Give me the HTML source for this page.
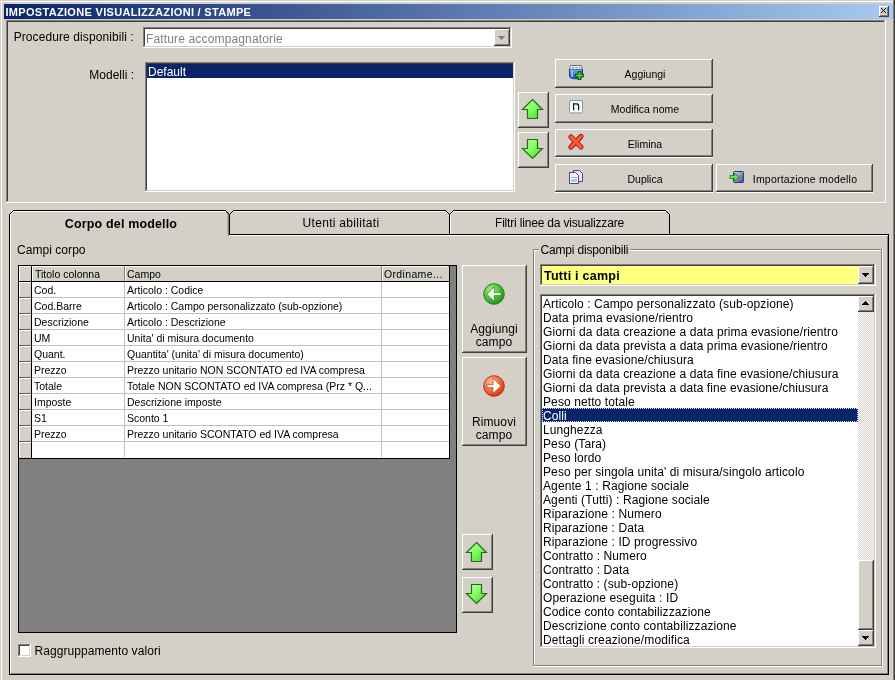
<!DOCTYPE html><html><head><meta charset="utf-8"><style>
html,body{margin:0;padding:0;width:895px;height:680px;overflow:hidden;background:#D4D0C8;position:relative;}
div{box-sizing:border-box;}
.t{filter:grayscale(1);}
</style></head><body>
<div style="position:absolute;left:0px;top:1px;width:893px;height:1px;background:#FFFFFF;"></div>
<div style="position:absolute;left:1px;top:1px;width:1px;height:679px;background:#FFFFFF;"></div>
<div style="position:absolute;left:893px;top:0px;width:1px;height:680px;background:#808080;"></div>
<div style="position:absolute;left:894px;top:0px;width:1px;height:680px;background:#404040;"></div>
<div style="position:absolute;left:4px;top:4px;width:889px;height:15px;background:linear-gradient(to right,#0A246A,#A6CAF0);"></div>
<div class="t" style="position:absolute;top:7px;font-family:'Liberation Sans', sans-serif;font-size:11px;line-height:11px;color:#FFFFFF;font-weight:bold;white-space:nowrap;letter-spacing:0.31px;left:5.5px;">IMPOSTAZIONE VISUALIZZAZIONI / STAMPE</div>
<div style="position:absolute;left:879px;top:6px;width:10px;height:11px;background:#404040;"></div>
<div style="position:absolute;left:879px;top:6px;width:9px;height:10px;background:#FFFFFF;"></div>
<div style="position:absolute;left:880px;top:7px;width:8px;height:9px;background:#808080;"></div>
<div style="position:absolute;left:880px;top:7px;width:7px;height:8px;background:#D4D0C8;"></div>
<div style="position:absolute;left:881px;top:8px;width:6px;height:7px;background:#D4D0C8;"></div>
<svg style="position:absolute;left:879px;top:6px" width="10" height="11" shape-rendering="crispEdges"><rect x="2" y="2" width="1" height="1" fill="#000"/><rect x="6" y="2" width="1" height="1" fill="#000"/><rect x="3" y="3" width="1" height="1" fill="#000"/><rect x="5" y="3" width="1" height="1" fill="#000"/><rect x="4" y="4" width="1" height="1" fill="#000"/><rect x="4" y="4" width="1" height="1" fill="#000"/><rect x="5" y="5" width="1" height="1" fill="#000"/><rect x="3" y="5" width="1" height="1" fill="#000"/><rect x="6" y="6" width="1" height="1" fill="#000"/><rect x="2" y="6" width="1" height="1" fill="#000"/></svg>
<div style="position:absolute;left:6px;top:20px;width:880px;height:183px;background:#FFFFFF;"></div>
<div style="position:absolute;left:6px;top:20px;width:879px;height:182px;background:#808080;"></div>
<div style="position:absolute;left:7px;top:21px;width:878px;height:181px;background:#D4D0C8;"></div>
<div style="position:absolute;left:7px;top:21px;width:877px;height:180px;background:#404040;"></div>
<div style="position:absolute;left:8px;top:22px;width:876px;height:179px;background:#D4D0C8;"></div>
<div class="t" style="position:absolute;top:31px;font-family:'Liberation Sans', sans-serif;font-size:12px;line-height:12px;color:#000;font-weight:normal;white-space:nowrap;letter-spacing:0.1px;right:761px;">Procedure disponibili :</div>
<div class="t" style="position:absolute;top:69px;font-family:'Liberation Sans', sans-serif;font-size:12px;line-height:12px;color:#000;font-weight:normal;white-space:nowrap;right:761px;">Modelli :</div>
<div style="position:absolute;left:143px;top:27px;width:369px;height:21px;background:#FFFFFF;"></div>
<div style="position:absolute;left:143px;top:27px;width:368px;height:20px;background:#808080;"></div>
<div style="position:absolute;left:144px;top:28px;width:367px;height:19px;background:#D4D0C8;"></div>
<div style="position:absolute;left:144px;top:28px;width:366px;height:18px;background:#404040;"></div>
<div style="position:absolute;left:145px;top:29px;width:365px;height:17px;background:#FFFFFF;"></div>
<div class="t" style="position:absolute;top:33px;font-family:'Liberation Sans', sans-serif;font-size:12px;line-height:12px;color:#808080;font-weight:normal;white-space:nowrap;letter-spacing:0.15px;left:146px;">Fatture accompagnatorie</div>
<div style="position:absolute;left:494px;top:29px;width:16px;height:17px;background:#404040;"></div>
<div style="position:absolute;left:494px;top:29px;width:15px;height:16px;background:#FFFFFF;"></div>
<div style="position:absolute;left:495px;top:30px;width:14px;height:15px;background:#808080;"></div>
<div style="position:absolute;left:495px;top:30px;width:13px;height:14px;background:#D4D0C8;"></div>
<div style="position:absolute;left:496px;top:31px;width:12px;height:13px;background:#D4D0C8;"></div>
<svg style="position:absolute;left:494px;top:29px" width="16" height="17" shape-rendering="crispEdges"><rect x="4" y="7" width="7" height="1" fill="#808080"/><rect x="5" y="8" width="5" height="1" fill="#808080"/><rect x="6" y="9" width="3" height="1" fill="#808080"/><rect x="7" y="10" width="1" height="1" fill="#808080"/></svg>
<div style="position:absolute;left:145px;top:62px;width:370px;height:130px;background:#FFFFFF;"></div>
<div style="position:absolute;left:145px;top:62px;width:369px;height:129px;background:#808080;"></div>
<div style="position:absolute;left:146px;top:63px;width:368px;height:128px;background:#D4D0C8;"></div>
<div style="position:absolute;left:146px;top:63px;width:367px;height:127px;background:#404040;"></div>
<div style="position:absolute;left:147px;top:64px;width:366px;height:126px;background:#FFFFFF;"></div>
<div style="position:absolute;left:147px;top:64px;width:366px;height:14px;background:#0A246A;"></div>
<div class="t" style="position:absolute;top:66px;font-family:'Liberation Sans', sans-serif;font-size:12px;line-height:12px;color:#FFFFFF;font-weight:normal;white-space:nowrap;left:148px;">Default</div>
<div style="position:absolute;left:518px;top:92px;width:31px;height:36px;background:#404040;"></div>
<div style="position:absolute;left:518px;top:92px;width:30px;height:35px;background:#FFFFFF;"></div>
<div style="position:absolute;left:519px;top:93px;width:29px;height:34px;background:#808080;"></div>
<div style="position:absolute;left:519px;top:93px;width:28px;height:33px;background:#D4D0C8;"></div>
<div style="position:absolute;left:520px;top:94px;width:27px;height:32px;background:#D4D0C8;"></div>
<div style="position:absolute;left:518px;top:132px;width:31px;height:36px;background:#404040;"></div>
<div style="position:absolute;left:518px;top:132px;width:30px;height:35px;background:#FFFFFF;"></div>
<div style="position:absolute;left:519px;top:133px;width:29px;height:34px;background:#808080;"></div>
<div style="position:absolute;left:519px;top:133px;width:28px;height:33px;background:#D4D0C8;"></div>
<div style="position:absolute;left:520px;top:134px;width:27px;height:32px;background:#D4D0C8;"></div>
<div style="position:absolute;left:555px;top:59px;width:158px;height:29px;background:#404040;"></div>
<div style="position:absolute;left:555px;top:59px;width:157px;height:28px;background:#FFFFFF;"></div>
<div style="position:absolute;left:556px;top:60px;width:156px;height:27px;background:#808080;"></div>
<div style="position:absolute;left:556px;top:60px;width:155px;height:26px;background:#D4D0C8;"></div>
<div style="position:absolute;left:557px;top:61px;width:154px;height:25px;background:#D4D0C8;"></div>
<div class="t" style="position:absolute;top:69px;font-family:'Liberation Sans', sans-serif;font-size:10.5px;line-height:10.5px;color:#000;font-weight:normal;white-space:nowrap;left:345px;width:600px;text-align:center;">Aggiungi</div>
<div style="position:absolute;left:555px;top:94px;width:158px;height:29px;background:#404040;"></div>
<div style="position:absolute;left:555px;top:94px;width:157px;height:28px;background:#FFFFFF;"></div>
<div style="position:absolute;left:556px;top:95px;width:156px;height:27px;background:#808080;"></div>
<div style="position:absolute;left:556px;top:95px;width:155px;height:26px;background:#D4D0C8;"></div>
<div style="position:absolute;left:557px;top:96px;width:154px;height:25px;background:#D4D0C8;"></div>
<div class="t" style="position:absolute;top:104px;font-family:'Liberation Sans', sans-serif;font-size:10.5px;line-height:10.5px;color:#000;font-weight:normal;white-space:nowrap;left:345px;width:600px;text-align:center;">Modifica nome</div>
<div style="position:absolute;left:555px;top:129px;width:158px;height:28px;background:#404040;"></div>
<div style="position:absolute;left:555px;top:129px;width:157px;height:27px;background:#FFFFFF;"></div>
<div style="position:absolute;left:556px;top:130px;width:156px;height:26px;background:#808080;"></div>
<div style="position:absolute;left:556px;top:130px;width:155px;height:25px;background:#D4D0C8;"></div>
<div style="position:absolute;left:557px;top:131px;width:154px;height:24px;background:#D4D0C8;"></div>
<div style="position:absolute;left:555px;top:157px;width:158px;height:1px;background:#FFFFFF;"></div>
<div class="t" style="position:absolute;top:139px;font-family:'Liberation Sans', sans-serif;font-size:10.5px;line-height:10.5px;color:#000;font-weight:normal;white-space:nowrap;left:345px;width:600px;text-align:center;">Elimina</div>
<div style="position:absolute;left:555px;top:164px;width:158px;height:28px;background:#404040;"></div>
<div style="position:absolute;left:555px;top:164px;width:157px;height:27px;background:#FFFFFF;"></div>
<div style="position:absolute;left:556px;top:165px;width:156px;height:26px;background:#808080;"></div>
<div style="position:absolute;left:556px;top:165px;width:155px;height:25px;background:#D4D0C8;"></div>
<div style="position:absolute;left:557px;top:166px;width:154px;height:24px;background:#D4D0C8;"></div>
<div style="position:absolute;left:555px;top:192px;width:158px;height:1px;background:#FFFFFF;"></div>
<div class="t" style="position:absolute;top:174px;font-family:'Liberation Sans', sans-serif;font-size:10.5px;line-height:10.5px;color:#000;font-weight:normal;white-space:nowrap;left:345px;width:600px;text-align:center;">Duplica</div>
<div style="position:absolute;left:716px;top:164px;width:157px;height:28px;background:#404040;"></div>
<div style="position:absolute;left:716px;top:164px;width:156px;height:27px;background:#FFFFFF;"></div>
<div style="position:absolute;left:717px;top:165px;width:155px;height:26px;background:#808080;"></div>
<div style="position:absolute;left:717px;top:165px;width:154px;height:25px;background:#D4D0C8;"></div>
<div style="position:absolute;left:718px;top:166px;width:153px;height:24px;background:#D4D0C8;"></div>
<div style="position:absolute;left:716px;top:192px;width:157px;height:1px;background:#FFFFFF;"></div>
<div class="t" style="position:absolute;top:174px;font-family:'Liberation Sans', sans-serif;font-size:10.5px;line-height:10.5px;color:#000;font-weight:normal;white-space:nowrap;letter-spacing:0.2px;left:505px;width:600px;text-align:center;">Importazione modello</div>
<div style="position:absolute;left:9px;top:234px;width:880px;height:441px;background:#000000;"></div>
<div style="position:absolute;left:10px;top:235px;width:878px;height:439px;background:#FFFFFF;"></div>
<div style="position:absolute;left:11px;top:236px;width:877px;height:438px;background:#808080;"></div>
<div style="position:absolute;left:11px;top:236px;width:876px;height:437px;background:#D4D0C8;"></div>
<svg style="position:absolute;left:0;top:0" width="895" height="240" shape-rendering="crispEdges"><rect x="230" y="211" width="219" height="23" fill="#D4D0C8"/><rect x="229" y="214" width="1" height="21" fill="#000"/><rect x="449" y="214" width="1" height="21" fill="#000"/><rect x="229" y="214" width="1" height="1" fill="#000"/><rect x="445" y="210" width="1" height="1" fill="#000"/><rect x="230" y="213" width="1" height="1" fill="#000"/><rect x="446" y="211" width="1" height="1" fill="#000"/><rect x="231" y="212" width="1" height="1" fill="#000"/><rect x="447" y="212" width="1" height="1" fill="#000"/><rect x="232" y="211" width="1" height="1" fill="#000"/><rect x="448" y="213" width="1" height="1" fill="#000"/><rect x="233" y="210" width="1" height="1" fill="#000"/><rect x="449" y="214" width="1" height="1" fill="#000"/><rect x="233" y="210" width="213" height="1" fill="#000"/><rect x="233" y="211" width="213" height="1" fill="#FFFFFF"/><rect x="229" y="210" width="0" height="0" fill="#D4D0C8"/><rect x="230" y="211" width="0" height="0" fill="#D4D0C8"/><rect x="231" y="212" width="0" height="0" fill="#D4D0C8"/><rect x="232" y="213" width="0" height="0" fill="#D4D0C8"/><rect x="450" y="211" width="219" height="23" fill="#D4D0C8"/><rect x="449" y="214" width="1" height="21" fill="#000"/><rect x="669" y="214" width="1" height="21" fill="#000"/><rect x="449" y="214" width="1" height="1" fill="#000"/><rect x="665" y="210" width="1" height="1" fill="#000"/><rect x="450" y="213" width="1" height="1" fill="#000"/><rect x="666" y="211" width="1" height="1" fill="#000"/><rect x="451" y="212" width="1" height="1" fill="#000"/><rect x="667" y="212" width="1" height="1" fill="#000"/><rect x="452" y="211" width="1" height="1" fill="#000"/><rect x="668" y="213" width="1" height="1" fill="#000"/><rect x="453" y="210" width="1" height="1" fill="#000"/><rect x="669" y="214" width="1" height="1" fill="#000"/><rect x="453" y="210" width="213" height="1" fill="#000"/><rect x="450" y="214" width="1" height="20" fill="#FFFFFF"/><rect x="450" y="214" width="1" height="1" fill="#FFFFFF"/><rect x="451" y="213" width="1" height="1" fill="#FFFFFF"/><rect x="452" y="212" width="1" height="1" fill="#FFFFFF"/><rect x="453" y="211" width="1" height="1" fill="#FFFFFF"/><rect x="453" y="211" width="213" height="1" fill="#FFFFFF"/><rect x="449" y="210" width="0" height="0" fill="#D4D0C8"/><rect x="450" y="211" width="0" height="0" fill="#D4D0C8"/><rect x="451" y="212" width="0" height="0" fill="#D4D0C8"/><rect x="452" y="213" width="0" height="0" fill="#D4D0C8"/><rect x="10" y="211" width="219" height="25" fill="#D4D0C8"/><rect x="9" y="214" width="1" height="21" fill="#000"/><rect x="229" y="214" width="1" height="21" fill="#000"/><rect x="9" y="214" width="1" height="1" fill="#000"/><rect x="225" y="210" width="1" height="1" fill="#000"/><rect x="10" y="213" width="1" height="1" fill="#000"/><rect x="226" y="211" width="1" height="1" fill="#000"/><rect x="11" y="212" width="1" height="1" fill="#000"/><rect x="227" y="212" width="1" height="1" fill="#000"/><rect x="12" y="211" width="1" height="1" fill="#000"/><rect x="228" y="213" width="1" height="1" fill="#000"/><rect x="13" y="210" width="1" height="1" fill="#000"/><rect x="229" y="214" width="1" height="1" fill="#000"/><rect x="13" y="210" width="213" height="1" fill="#000"/><rect x="10" y="214" width="1" height="22" fill="#FFFFFF"/><rect x="10" y="214" width="1" height="1" fill="#FFFFFF"/><rect x="11" y="213" width="1" height="1" fill="#FFFFFF"/><rect x="12" y="212" width="1" height="1" fill="#FFFFFF"/><rect x="13" y="211" width="1" height="1" fill="#FFFFFF"/><rect x="13" y="211" width="213" height="1" fill="#FFFFFF"/><rect x="9" y="210" width="0" height="0" fill="#D4D0C8"/><rect x="10" y="211" width="0" height="0" fill="#D4D0C8"/><rect x="11" y="212" width="0" height="0" fill="#D4D0C8"/><rect x="12" y="213" width="0" height="0" fill="#D4D0C8"/><rect x="228" y="214" width="1" height="22" fill="#808080"/><rect x="227" y="214" width="1" height="22" fill="#B4B0AA"/><rect x="226" y="212" width="1" height="1" fill="#808080"/><rect x="227" y="213" width="1" height="1" fill="#808080"/></svg>
<div style="position:absolute;left:11px;top:234px;width:217px;height:2px;background:#D4D0C8;"></div>
<div style="position:absolute;left:10px;top:234px;width:1px;height:3px;background:#FFFFFF;"></div>
<div class="t" style="position:absolute;top:218px;font-family:'Liberation Sans', sans-serif;font-size:12.5px;line-height:12.5px;color:#000;font-weight:bold;white-space:nowrap;letter-spacing:0.15px;left:-179px;width:600px;text-align:center;">Corpo del modello</div>
<div class="t" style="position:absolute;top:217px;font-family:'Liberation Sans', sans-serif;font-size:12px;line-height:12px;color:#000;font-weight:normal;white-space:nowrap;letter-spacing:0.3px;left:41px;width:600px;text-align:center;">Utenti abilitati</div>
<div class="t" style="position:absolute;top:217px;font-family:'Liberation Sans', sans-serif;font-size:12px;line-height:12px;color:#000;font-weight:normal;white-space:nowrap;letter-spacing:-0.18px;left:259.5px;width:600px;text-align:center;">Filtri linee da visualizzare</div>
<div class="t" style="position:absolute;top:244px;font-family:'Liberation Sans', sans-serif;font-size:12px;line-height:12px;color:#000;font-weight:normal;white-space:nowrap;letter-spacing:0.05px;left:17px;">Campi corpo</div>
<div style="position:absolute;left:18px;top:265px;width:439px;height:368px;background:#000000;"></div>
<div style="position:absolute;left:19px;top:266px;width:437px;height:366px;background:#808080;"></div>
<div style="position:absolute;left:19px;top:266px;width:430px;height:192px;background:#FFFFFF;"></div>
<div style="position:absolute;left:19px;top:266px;width:12px;height:192px;background:#D4D0C8;"></div>
<div style="position:absolute;left:31px;top:266px;width:1px;height:192px;background:#000;"></div>
<div style="position:absolute;left:32px;top:266px;width:417px;height:15px;background:#D4D0C8;"></div>
<div style="position:absolute;left:19px;top:281px;width:430px;height:1px;background:#000;"></div>
<div style="position:absolute;left:449px;top:266px;width:1px;height:192px;background:#000;"></div>
<div style="position:absolute;left:19px;top:458px;width:431px;height:1px;background:#000;"></div>
<div style="position:absolute;left:19px;top:266px;width:12px;height:1px;background:#FFFFFF;"></div>
<div style="position:absolute;left:19px;top:266px;width:1px;height:15px;background:#FFFFFF;"></div>
<div style="position:absolute;left:32px;top:266px;width:92px;height:1px;background:#FFFFFF;"></div>
<div style="position:absolute;left:32px;top:266px;width:1px;height:15px;background:#FFFFFF;"></div>
<div style="position:absolute;left:125px;top:266px;width:256px;height:1px;background:#FFFFFF;"></div>
<div style="position:absolute;left:125px;top:266px;width:1px;height:15px;background:#FFFFFF;"></div>
<div style="position:absolute;left:382px;top:266px;width:66px;height:1px;background:#FFFFFF;"></div>
<div style="position:absolute;left:382px;top:266px;width:1px;height:15px;background:#FFFFFF;"></div>
<div style="position:absolute;left:124px;top:266px;width:1px;height:15px;background:#808080;"></div>
<div style="position:absolute;left:381px;top:266px;width:1px;height:15px;background:#808080;"></div>
<div class="t" style="position:absolute;top:269px;font-family:'Liberation Sans', sans-serif;font-size:10.5px;line-height:10.5px;color:#000;font-weight:normal;white-space:nowrap;left:35px;">Titolo colonna</div>
<div class="t" style="position:absolute;top:269px;font-family:'Liberation Sans', sans-serif;font-size:10.5px;line-height:10.5px;color:#000;font-weight:normal;white-space:nowrap;left:127px;">Campo</div>
<div class="t" style="position:absolute;top:269px;font-family:'Liberation Sans', sans-serif;font-size:10.5px;line-height:10.5px;color:#000;font-weight:normal;white-space:nowrap;letter-spacing:0.35px;left:384px;">Ordiname...</div>
<div style="position:absolute;left:19px;top:282px;width:12px;height:1px;background:#FFFFFF;"></div>
<div style="position:absolute;left:19px;top:282px;width:1px;height:15px;background:#FFFFFF;"></div>
<div style="position:absolute;left:19px;top:297px;width:12px;height:1px;background:#606060;"></div>
<div style="position:absolute;left:32px;top:297px;width:417px;height:1px;background:#C0C0C0;"></div>
<div style="position:absolute;left:124px;top:282px;width:1px;height:16px;background:#C0C0C0;"></div>
<div style="position:absolute;left:381px;top:282px;width:1px;height:16px;background:#C0C0C0;"></div>
<div class="t" style="position:absolute;top:285px;font-family:'Liberation Sans', sans-serif;font-size:10.5px;line-height:10.5px;color:#000;font-weight:normal;white-space:nowrap;left:34px;">Cod.</div>
<div class="t" style="position:absolute;top:285px;font-family:'Liberation Sans', sans-serif;font-size:10.5px;line-height:10.5px;color:#000;font-weight:normal;white-space:nowrap;left:127px;">Articolo : Codice</div>
<div style="position:absolute;left:19px;top:298px;width:12px;height:1px;background:#FFFFFF;"></div>
<div style="position:absolute;left:19px;top:298px;width:1px;height:15px;background:#FFFFFF;"></div>
<div style="position:absolute;left:19px;top:313px;width:12px;height:1px;background:#606060;"></div>
<div style="position:absolute;left:32px;top:313px;width:417px;height:1px;background:#C0C0C0;"></div>
<div style="position:absolute;left:124px;top:298px;width:1px;height:16px;background:#C0C0C0;"></div>
<div style="position:absolute;left:381px;top:298px;width:1px;height:16px;background:#C0C0C0;"></div>
<div class="t" style="position:absolute;top:301px;font-family:'Liberation Sans', sans-serif;font-size:10.5px;line-height:10.5px;color:#000;font-weight:normal;white-space:nowrap;left:34px;">Cod.Barre</div>
<div class="t" style="position:absolute;top:301px;font-family:'Liberation Sans', sans-serif;font-size:10.5px;line-height:10.5px;color:#000;font-weight:normal;white-space:nowrap;left:127px;">Articolo : Campo personalizzato (sub-opzione)</div>
<div style="position:absolute;left:19px;top:314px;width:12px;height:1px;background:#FFFFFF;"></div>
<div style="position:absolute;left:19px;top:314px;width:1px;height:15px;background:#FFFFFF;"></div>
<div style="position:absolute;left:19px;top:329px;width:12px;height:1px;background:#606060;"></div>
<div style="position:absolute;left:32px;top:329px;width:417px;height:1px;background:#C0C0C0;"></div>
<div style="position:absolute;left:124px;top:314px;width:1px;height:16px;background:#C0C0C0;"></div>
<div style="position:absolute;left:381px;top:314px;width:1px;height:16px;background:#C0C0C0;"></div>
<div class="t" style="position:absolute;top:317px;font-family:'Liberation Sans', sans-serif;font-size:10.5px;line-height:10.5px;color:#000;font-weight:normal;white-space:nowrap;left:34px;">Descrizione</div>
<div class="t" style="position:absolute;top:317px;font-family:'Liberation Sans', sans-serif;font-size:10.5px;line-height:10.5px;color:#000;font-weight:normal;white-space:nowrap;left:127px;">Articolo : Descrizione</div>
<div style="position:absolute;left:19px;top:330px;width:12px;height:1px;background:#FFFFFF;"></div>
<div style="position:absolute;left:19px;top:330px;width:1px;height:15px;background:#FFFFFF;"></div>
<div style="position:absolute;left:19px;top:345px;width:12px;height:1px;background:#606060;"></div>
<div style="position:absolute;left:32px;top:345px;width:417px;height:1px;background:#C0C0C0;"></div>
<div style="position:absolute;left:124px;top:330px;width:1px;height:16px;background:#C0C0C0;"></div>
<div style="position:absolute;left:381px;top:330px;width:1px;height:16px;background:#C0C0C0;"></div>
<div class="t" style="position:absolute;top:333px;font-family:'Liberation Sans', sans-serif;font-size:10.5px;line-height:10.5px;color:#000;font-weight:normal;white-space:nowrap;left:34px;">UM</div>
<div class="t" style="position:absolute;top:333px;font-family:'Liberation Sans', sans-serif;font-size:10.5px;line-height:10.5px;color:#000;font-weight:normal;white-space:nowrap;left:127px;">Unita&#x27; di misura documento</div>
<div style="position:absolute;left:19px;top:346px;width:12px;height:1px;background:#FFFFFF;"></div>
<div style="position:absolute;left:19px;top:346px;width:1px;height:15px;background:#FFFFFF;"></div>
<div style="position:absolute;left:19px;top:361px;width:12px;height:1px;background:#606060;"></div>
<div style="position:absolute;left:32px;top:361px;width:417px;height:1px;background:#C0C0C0;"></div>
<div style="position:absolute;left:124px;top:346px;width:1px;height:16px;background:#C0C0C0;"></div>
<div style="position:absolute;left:381px;top:346px;width:1px;height:16px;background:#C0C0C0;"></div>
<div class="t" style="position:absolute;top:349px;font-family:'Liberation Sans', sans-serif;font-size:10.5px;line-height:10.5px;color:#000;font-weight:normal;white-space:nowrap;left:34px;">Quant.</div>
<div class="t" style="position:absolute;top:349px;font-family:'Liberation Sans', sans-serif;font-size:10.5px;line-height:10.5px;color:#000;font-weight:normal;white-space:nowrap;left:127px;">Quantita&#x27; (unita&#x27; di misura documento)</div>
<div style="position:absolute;left:19px;top:362px;width:12px;height:1px;background:#FFFFFF;"></div>
<div style="position:absolute;left:19px;top:362px;width:1px;height:15px;background:#FFFFFF;"></div>
<div style="position:absolute;left:19px;top:377px;width:12px;height:1px;background:#606060;"></div>
<div style="position:absolute;left:32px;top:377px;width:417px;height:1px;background:#C0C0C0;"></div>
<div style="position:absolute;left:124px;top:362px;width:1px;height:16px;background:#C0C0C0;"></div>
<div style="position:absolute;left:381px;top:362px;width:1px;height:16px;background:#C0C0C0;"></div>
<div class="t" style="position:absolute;top:365px;font-family:'Liberation Sans', sans-serif;font-size:10.5px;line-height:10.5px;color:#000;font-weight:normal;white-space:nowrap;left:34px;">Prezzo</div>
<div class="t" style="position:absolute;top:365px;font-family:'Liberation Sans', sans-serif;font-size:10.5px;line-height:10.5px;color:#000;font-weight:normal;white-space:nowrap;left:127px;">Prezzo unitario NON SCONTATO ed IVA compresa</div>
<div style="position:absolute;left:19px;top:378px;width:12px;height:1px;background:#FFFFFF;"></div>
<div style="position:absolute;left:19px;top:378px;width:1px;height:15px;background:#FFFFFF;"></div>
<div style="position:absolute;left:19px;top:393px;width:12px;height:1px;background:#606060;"></div>
<div style="position:absolute;left:32px;top:393px;width:417px;height:1px;background:#C0C0C0;"></div>
<div style="position:absolute;left:124px;top:378px;width:1px;height:16px;background:#C0C0C0;"></div>
<div style="position:absolute;left:381px;top:378px;width:1px;height:16px;background:#C0C0C0;"></div>
<div class="t" style="position:absolute;top:381px;font-family:'Liberation Sans', sans-serif;font-size:10.5px;line-height:10.5px;color:#000;font-weight:normal;white-space:nowrap;left:34px;">Totale</div>
<div class="t" style="position:absolute;top:381px;font-family:'Liberation Sans', sans-serif;font-size:10.5px;line-height:10.5px;color:#000;font-weight:normal;white-space:nowrap;left:127px;">Totale NON SCONTATO ed IVA compresa (Prz * Q...</div>
<div style="position:absolute;left:19px;top:394px;width:12px;height:1px;background:#FFFFFF;"></div>
<div style="position:absolute;left:19px;top:394px;width:1px;height:15px;background:#FFFFFF;"></div>
<div style="position:absolute;left:19px;top:409px;width:12px;height:1px;background:#606060;"></div>
<div style="position:absolute;left:32px;top:409px;width:417px;height:1px;background:#C0C0C0;"></div>
<div style="position:absolute;left:124px;top:394px;width:1px;height:16px;background:#C0C0C0;"></div>
<div style="position:absolute;left:381px;top:394px;width:1px;height:16px;background:#C0C0C0;"></div>
<div class="t" style="position:absolute;top:397px;font-family:'Liberation Sans', sans-serif;font-size:10.5px;line-height:10.5px;color:#000;font-weight:normal;white-space:nowrap;left:34px;">Imposte</div>
<div class="t" style="position:absolute;top:397px;font-family:'Liberation Sans', sans-serif;font-size:10.5px;line-height:10.5px;color:#000;font-weight:normal;white-space:nowrap;left:127px;">Descrizione imposte</div>
<div style="position:absolute;left:19px;top:410px;width:12px;height:1px;background:#FFFFFF;"></div>
<div style="position:absolute;left:19px;top:410px;width:1px;height:15px;background:#FFFFFF;"></div>
<div style="position:absolute;left:19px;top:425px;width:12px;height:1px;background:#606060;"></div>
<div style="position:absolute;left:32px;top:425px;width:417px;height:1px;background:#C0C0C0;"></div>
<div style="position:absolute;left:124px;top:410px;width:1px;height:16px;background:#C0C0C0;"></div>
<div style="position:absolute;left:381px;top:410px;width:1px;height:16px;background:#C0C0C0;"></div>
<div class="t" style="position:absolute;top:413px;font-family:'Liberation Sans', sans-serif;font-size:10.5px;line-height:10.5px;color:#000;font-weight:normal;white-space:nowrap;left:34px;">S1</div>
<div class="t" style="position:absolute;top:413px;font-family:'Liberation Sans', sans-serif;font-size:10.5px;line-height:10.5px;color:#000;font-weight:normal;white-space:nowrap;left:127px;">Sconto 1</div>
<div style="position:absolute;left:19px;top:426px;width:12px;height:1px;background:#FFFFFF;"></div>
<div style="position:absolute;left:19px;top:426px;width:1px;height:15px;background:#FFFFFF;"></div>
<div style="position:absolute;left:19px;top:441px;width:12px;height:1px;background:#606060;"></div>
<div style="position:absolute;left:32px;top:441px;width:417px;height:1px;background:#C0C0C0;"></div>
<div style="position:absolute;left:124px;top:426px;width:1px;height:16px;background:#C0C0C0;"></div>
<div style="position:absolute;left:381px;top:426px;width:1px;height:16px;background:#C0C0C0;"></div>
<div class="t" style="position:absolute;top:429px;font-family:'Liberation Sans', sans-serif;font-size:10.5px;line-height:10.5px;color:#000;font-weight:normal;white-space:nowrap;left:34px;">Prezzo</div>
<div class="t" style="position:absolute;top:429px;font-family:'Liberation Sans', sans-serif;font-size:10.5px;line-height:10.5px;color:#000;font-weight:normal;white-space:nowrap;left:127px;">Prezzo unitario SCONTATO ed IVA compresa</div>
<div style="position:absolute;left:19px;top:442px;width:12px;height:1px;background:#FFFFFF;"></div>
<div style="position:absolute;left:19px;top:442px;width:1px;height:15px;background:#FFFFFF;"></div>
<div style="position:absolute;left:124px;top:442px;width:1px;height:15px;background:#C0C0C0;"></div>
<div style="position:absolute;left:381px;top:442px;width:1px;height:15px;background:#C0C0C0;"></div>
<div style="position:absolute;left:462px;top:265px;width:65px;height:88px;background:#404040;"></div>
<div style="position:absolute;left:462px;top:265px;width:64px;height:87px;background:#FFFFFF;"></div>
<div style="position:absolute;left:463px;top:266px;width:63px;height:86px;background:#808080;"></div>
<div style="position:absolute;left:463px;top:266px;width:62px;height:85px;background:#D4D0C8;"></div>
<div style="position:absolute;left:464px;top:267px;width:61px;height:84px;background:#D4D0C8;"></div>
<div class="t" style="position:absolute;top:323px;font-family:'Liberation Sans', sans-serif;font-size:12px;line-height:12px;color:#000;font-weight:normal;white-space:nowrap;letter-spacing:0.1px;left:194px;width:600px;text-align:center;">Aggiungi</div>
<div class="t" style="position:absolute;top:336px;font-family:'Liberation Sans', sans-serif;font-size:12px;line-height:12px;color:#000;font-weight:normal;white-space:nowrap;letter-spacing:0.1px;left:194px;width:600px;text-align:center;">campo</div>
<div style="position:absolute;left:462px;top:357px;width:65px;height:89px;background:#404040;"></div>
<div style="position:absolute;left:462px;top:357px;width:64px;height:88px;background:#FFFFFF;"></div>
<div style="position:absolute;left:463px;top:358px;width:63px;height:87px;background:#808080;"></div>
<div style="position:absolute;left:463px;top:358px;width:62px;height:86px;background:#D4D0C8;"></div>
<div style="position:absolute;left:464px;top:359px;width:61px;height:85px;background:#D4D0C8;"></div>
<div class="t" style="position:absolute;top:416px;font-family:'Liberation Sans', sans-serif;font-size:12px;line-height:12px;color:#000;font-weight:normal;white-space:nowrap;letter-spacing:0.1px;left:194px;width:600px;text-align:center;">Rimuovi</div>
<div class="t" style="position:absolute;top:429px;font-family:'Liberation Sans', sans-serif;font-size:12px;line-height:12px;color:#000;font-weight:normal;white-space:nowrap;letter-spacing:0.1px;left:194px;width:600px;text-align:center;">campo</div>
<div style="position:absolute;left:462px;top:534px;width:31px;height:36px;background:#404040;"></div>
<div style="position:absolute;left:462px;top:534px;width:30px;height:35px;background:#FFFFFF;"></div>
<div style="position:absolute;left:463px;top:535px;width:29px;height:34px;background:#808080;"></div>
<div style="position:absolute;left:463px;top:535px;width:28px;height:33px;background:#D4D0C8;"></div>
<div style="position:absolute;left:464px;top:536px;width:27px;height:32px;background:#D4D0C8;"></div>
<div style="position:absolute;left:462px;top:577px;width:31px;height:36px;background:#404040;"></div>
<div style="position:absolute;left:462px;top:577px;width:30px;height:35px;background:#FFFFFF;"></div>
<div style="position:absolute;left:463px;top:578px;width:29px;height:34px;background:#808080;"></div>
<div style="position:absolute;left:463px;top:578px;width:28px;height:33px;background:#D4D0C8;"></div>
<div style="position:absolute;left:464px;top:579px;width:27px;height:32px;background:#D4D0C8;"></div>
<div style="position:absolute;left:18px;top:644px;width:13px;height:13px;background:#FFFFFF;"></div>
<div style="position:absolute;left:18px;top:644px;width:12px;height:12px;background:#808080;"></div>
<div style="position:absolute;left:19px;top:645px;width:11px;height:11px;background:#D4D0C8;"></div>
<div style="position:absolute;left:19px;top:645px;width:10px;height:10px;background:#404040;"></div>
<div style="position:absolute;left:20px;top:646px;width:9px;height:9px;background:#FFFFFF;"></div>
<div class="t" style="position:absolute;top:645px;font-family:'Liberation Sans', sans-serif;font-size:12px;line-height:12px;color:#000;font-weight:normal;white-space:nowrap;letter-spacing:0.07px;left:34.5px;">Raggruppamento valori</div>
<div style="position:absolute;left:533px;top:249px;width:349px;height:1px;background:#808080;"></div>
<div style="position:absolute;left:533px;top:249px;width:1px;height:417px;background:#808080;"></div>
<div style="position:absolute;left:533px;top:665px;width:349px;height:1px;background:#808080;"></div>
<div style="position:absolute;left:881px;top:249px;width:1px;height:417px;background:#808080;"></div>
<div style="position:absolute;left:534px;top:250px;width:347px;height:1px;background:#FFFFFF;"></div>
<div style="position:absolute;left:534px;top:250px;width:1px;height:415px;background:#FFFFFF;"></div>
<div style="position:absolute;left:533px;top:666px;width:350px;height:1px;background:#FFFFFF;"></div>
<div style="position:absolute;left:882px;top:249px;width:1px;height:418px;background:#FFFFFF;"></div>
<div style="position:absolute;left:539px;top:244px;width:91px;height:9px;background:#D4D0C8;"></div>
<div class="t" style="position:absolute;top:244px;font-family:'Liberation Sans', sans-serif;font-size:12px;line-height:12px;color:#000;font-weight:normal;white-space:nowrap;letter-spacing:-0.18px;left:540.5px;">Campi disponibili</div>
<div style="position:absolute;left:540px;top:264px;width:336px;height:22px;background:#FFFFFF;"></div>
<div style="position:absolute;left:540px;top:264px;width:335px;height:21px;background:#808080;"></div>
<div style="position:absolute;left:541px;top:265px;width:334px;height:20px;background:#D4D0C8;"></div>
<div style="position:absolute;left:541px;top:265px;width:333px;height:19px;background:#404040;"></div>
<div style="position:absolute;left:542px;top:266px;width:332px;height:18px;background:#FFFF80;"></div>
<div class="t" style="position:absolute;top:270px;font-family:'Liberation Sans', sans-serif;font-size:12.5px;line-height:12.5px;color:#000;font-weight:bold;white-space:nowrap;letter-spacing:0.25px;left:544px;">Tutti i campi</div>
<div style="position:absolute;left:858px;top:266px;width:16px;height:18px;background:#404040;"></div>
<div style="position:absolute;left:858px;top:266px;width:15px;height:17px;background:#FFFFFF;"></div>
<div style="position:absolute;left:859px;top:267px;width:14px;height:16px;background:#808080;"></div>
<div style="position:absolute;left:859px;top:267px;width:13px;height:15px;background:#D4D0C8;"></div>
<div style="position:absolute;left:860px;top:268px;width:12px;height:14px;background:#D4D0C8;"></div>
<svg style="position:absolute;left:858px;top:266px" width="16" height="17" shape-rendering="crispEdges"><rect x="4" y="7" width="7" height="1" fill="#000"/><rect x="5" y="8" width="5" height="1" fill="#000"/><rect x="6" y="9" width="3" height="1" fill="#000"/><rect x="7" y="10" width="1" height="1" fill="#000"/></svg>
<div style="position:absolute;left:540px;top:294px;width:336px;height:354px;background:#FFFFFF;"></div>
<div style="position:absolute;left:540px;top:294px;width:335px;height:353px;background:#808080;"></div>
<div style="position:absolute;left:541px;top:295px;width:334px;height:352px;background:#D4D0C8;"></div>
<div style="position:absolute;left:541px;top:295px;width:333px;height:351px;background:#404040;"></div>
<div style="position:absolute;left:542px;top:296px;width:332px;height:350px;background:#FFFFFF;"></div>
<div class="t" style="position:absolute;top:298px;font-family:'Liberation Sans', sans-serif;font-size:12px;line-height:12px;color:#000;font-weight:normal;white-space:nowrap;letter-spacing:0.1px;left:543px;">Articolo : Campo personalizzato (sub-opzione)</div>
<div class="t" style="position:absolute;top:312px;font-family:'Liberation Sans', sans-serif;font-size:12px;line-height:12px;color:#000;font-weight:normal;white-space:nowrap;letter-spacing:0.1px;left:543px;">Data prima evasione/rientro</div>
<div class="t" style="position:absolute;top:326px;font-family:'Liberation Sans', sans-serif;font-size:12px;line-height:12px;color:#000;font-weight:normal;white-space:nowrap;letter-spacing:0.1px;left:543px;">Giorni da data creazione a data prima evasione/rientro</div>
<div class="t" style="position:absolute;top:340px;font-family:'Liberation Sans', sans-serif;font-size:12px;line-height:12px;color:#000;font-weight:normal;white-space:nowrap;letter-spacing:0.1px;left:543px;">Giorni da data prevista a data prima evasione/rientro</div>
<div class="t" style="position:absolute;top:354px;font-family:'Liberation Sans', sans-serif;font-size:12px;line-height:12px;color:#000;font-weight:normal;white-space:nowrap;letter-spacing:0.1px;left:543px;">Data fine evasione/chiusura</div>
<div class="t" style="position:absolute;top:368px;font-family:'Liberation Sans', sans-serif;font-size:12px;line-height:12px;color:#000;font-weight:normal;white-space:nowrap;letter-spacing:0.1px;left:543px;">Giorni da data creazione a data fine evasione/chiusura</div>
<div class="t" style="position:absolute;top:382px;font-family:'Liberation Sans', sans-serif;font-size:12px;line-height:12px;color:#000;font-weight:normal;white-space:nowrap;letter-spacing:0.1px;left:543px;">Giorni da data prevista a data fine evasione/chiusura</div>
<div class="t" style="position:absolute;top:396px;font-family:'Liberation Sans', sans-serif;font-size:12px;line-height:12px;color:#000;font-weight:normal;white-space:nowrap;letter-spacing:0.1px;left:543px;">Peso netto totale</div>
<div style="position:absolute;left:542px;top:408px;width:316px;height:14px;background:#0A246A;"></div>
<div style="position:absolute;left:542px;top:408px;width:316px;height:1px;background:repeating-linear-gradient(to right,#D8DCF0 0 1px,transparent 1px 2px)"></div>
<div style="position:absolute;left:542px;top:421px;width:316px;height:1px;background:repeating-linear-gradient(to right,#D8DCF0 0 1px,transparent 1px 2px)"></div>
<div style="position:absolute;left:542px;top:408px;width:1px;height:14px;background:repeating-linear-gradient(to bottom,#D8DCF0 0 1px,transparent 1px 2px)"></div>
<div style="position:absolute;left:857px;top:408px;width:1px;height:14px;background:repeating-linear-gradient(to bottom,#D8DCF0 0 1px,transparent 1px 2px)"></div>
<div class="t" style="position:absolute;top:410px;font-family:'Liberation Sans', sans-serif;font-size:12px;line-height:12px;color:#FFFFFF;font-weight:normal;white-space:nowrap;letter-spacing:0.1px;left:543px;">Colli</div>
<div class="t" style="position:absolute;top:424px;font-family:'Liberation Sans', sans-serif;font-size:12px;line-height:12px;color:#000;font-weight:normal;white-space:nowrap;letter-spacing:0.1px;left:543px;">Lunghezza</div>
<div class="t" style="position:absolute;top:438px;font-family:'Liberation Sans', sans-serif;font-size:12px;line-height:12px;color:#000;font-weight:normal;white-space:nowrap;letter-spacing:0.1px;left:543px;">Peso (Tara)</div>
<div class="t" style="position:absolute;top:452px;font-family:'Liberation Sans', sans-serif;font-size:12px;line-height:12px;color:#000;font-weight:normal;white-space:nowrap;letter-spacing:0.1px;left:543px;">Peso lordo</div>
<div class="t" style="position:absolute;top:466px;font-family:'Liberation Sans', sans-serif;font-size:12px;line-height:12px;color:#000;font-weight:normal;white-space:nowrap;letter-spacing:0.1px;left:543px;">Peso per singola unita&#x27; di misura/singolo articolo</div>
<div class="t" style="position:absolute;top:480px;font-family:'Liberation Sans', sans-serif;font-size:12px;line-height:12px;color:#000;font-weight:normal;white-space:nowrap;letter-spacing:0.1px;left:543px;">Agente 1 : Ragione sociale</div>
<div class="t" style="position:absolute;top:494px;font-family:'Liberation Sans', sans-serif;font-size:12px;line-height:12px;color:#000;font-weight:normal;white-space:nowrap;letter-spacing:0.1px;left:543px;">Agenti (Tutti) : Ragione sociale</div>
<div class="t" style="position:absolute;top:508px;font-family:'Liberation Sans', sans-serif;font-size:12px;line-height:12px;color:#000;font-weight:normal;white-space:nowrap;letter-spacing:0.1px;left:543px;">Riparazione : Numero</div>
<div class="t" style="position:absolute;top:522px;font-family:'Liberation Sans', sans-serif;font-size:12px;line-height:12px;color:#000;font-weight:normal;white-space:nowrap;letter-spacing:0.1px;left:543px;">Riparazione : Data</div>
<div class="t" style="position:absolute;top:536px;font-family:'Liberation Sans', sans-serif;font-size:12px;line-height:12px;color:#000;font-weight:normal;white-space:nowrap;letter-spacing:0.1px;left:543px;">Riparazione : ID progressivo</div>
<div class="t" style="position:absolute;top:550px;font-family:'Liberation Sans', sans-serif;font-size:12px;line-height:12px;color:#000;font-weight:normal;white-space:nowrap;letter-spacing:0.1px;left:543px;">Contratto : Numero</div>
<div class="t" style="position:absolute;top:564px;font-family:'Liberation Sans', sans-serif;font-size:12px;line-height:12px;color:#000;font-weight:normal;white-space:nowrap;letter-spacing:0.1px;left:543px;">Contratto : Data</div>
<div class="t" style="position:absolute;top:578px;font-family:'Liberation Sans', sans-serif;font-size:12px;line-height:12px;color:#000;font-weight:normal;white-space:nowrap;letter-spacing:0.1px;left:543px;">Contratto : (sub-opzione)</div>
<div class="t" style="position:absolute;top:592px;font-family:'Liberation Sans', sans-serif;font-size:12px;line-height:12px;color:#000;font-weight:normal;white-space:nowrap;letter-spacing:0.1px;left:543px;">Operazione eseguita : ID</div>
<div class="t" style="position:absolute;top:606px;font-family:'Liberation Sans', sans-serif;font-size:12px;line-height:12px;color:#000;font-weight:normal;white-space:nowrap;letter-spacing:0.1px;left:543px;">Codice conto contabilizzazione</div>
<div class="t" style="position:absolute;top:620px;font-family:'Liberation Sans', sans-serif;font-size:12px;line-height:12px;color:#000;font-weight:normal;white-space:nowrap;letter-spacing:0.1px;left:543px;">Descrizione conto contabilizzazione</div>
<div class="t" style="position:absolute;top:634px;font-family:'Liberation Sans', sans-serif;font-size:12px;line-height:12px;color:#000;font-weight:normal;white-space:nowrap;letter-spacing:0.1px;left:543px;">Dettagli creazione/modifica</div>
<div style="position:absolute;left:858px;top:312px;width:16px;height:248px;background-color:#FFFFFF;background-image:linear-gradient(45deg,#D4D0C8 25%,transparent 25%,transparent 75%,#D4D0C8 75%),linear-gradient(45deg,#D4D0C8 25%,transparent 25%,transparent 75%,#D4D0C8 75%);background-size:2px 2px;background-position:0 0,1px 1px;"></div>
<div style="position:absolute;left:858px;top:296px;width:16px;height:16px;background:#404040;"></div>
<div style="position:absolute;left:858px;top:296px;width:15px;height:15px;background:#FFFFFF;"></div>
<div style="position:absolute;left:859px;top:297px;width:14px;height:14px;background:#808080;"></div>
<div style="position:absolute;left:859px;top:297px;width:13px;height:13px;background:#D4D0C8;"></div>
<div style="position:absolute;left:860px;top:298px;width:12px;height:12px;background:#D4D0C8;"></div>
<div style="position:absolute;left:858px;top:560px;width:16px;height:70px;background:#404040;"></div>
<div style="position:absolute;left:858px;top:560px;width:15px;height:69px;background:#FFFFFF;"></div>
<div style="position:absolute;left:859px;top:561px;width:14px;height:68px;background:#808080;"></div>
<div style="position:absolute;left:859px;top:561px;width:13px;height:67px;background:#D4D0C8;"></div>
<div style="position:absolute;left:860px;top:562px;width:12px;height:66px;background:#D4D0C8;"></div>
<div style="position:absolute;left:858px;top:630px;width:16px;height:16px;background:#404040;"></div>
<div style="position:absolute;left:858px;top:630px;width:15px;height:15px;background:#FFFFFF;"></div>
<div style="position:absolute;left:859px;top:631px;width:14px;height:14px;background:#808080;"></div>
<div style="position:absolute;left:859px;top:631px;width:13px;height:13px;background:#D4D0C8;"></div>
<div style="position:absolute;left:860px;top:632px;width:12px;height:12px;background:#D4D0C8;"></div>
<svg style="position:absolute;left:858px;top:296px" width="16" height="16" shape-rendering="crispEdges"><rect x="7" y="5" width="1" height="1" fill="#000"/><rect x="6" y="6" width="3" height="1" fill="#000"/><rect x="5" y="7" width="5" height="1" fill="#000"/><rect x="4" y="8" width="7" height="1" fill="#000"/></svg>
<svg style="position:absolute;left:858px;top:630px" width="16" height="16" shape-rendering="crispEdges"><rect x="4" y="6" width="7" height="1" fill="#000"/><rect x="5" y="7" width="5" height="1" fill="#000"/><rect x="6" y="8" width="3" height="1" fill="#000"/><rect x="7" y="9" width="1" height="1" fill="#000"/></svg>
<svg style="position:absolute;left:0;top:0" width="0" height="0"><defs><linearGradient id="ga" x1="0" y1="0" x2="1" y2="1"><stop offset="0" stop-color="#C8FFA8"/><stop offset="0.45" stop-color="#84FF64"/><stop offset="1" stop-color="#48D038"/></linearGradient><radialGradient id="gc" cx="0.35" cy="0.3" r="0.8"><stop offset="0" stop-color="#A8F080"/><stop offset="0.6" stop-color="#40B830"/><stop offset="1" stop-color="#208818"/></radialGradient><radialGradient id="oc" cx="0.35" cy="0.3" r="0.8"><stop offset="0" stop-color="#FFC0A0"/><stop offset="0.6" stop-color="#F06030"/><stop offset="1" stop-color="#C83010"/></radialGradient><linearGradient id="bb" x1="0" y1="0" x2="0" y2="1"><stop offset="0" stop-color="#70B0F8"/><stop offset="1" stop-color="#1850B0"/></linearGradient><linearGradient id="imp" x1="0" y1="0" x2="1" y2="1"><stop offset="0" stop-color="#D8E0F8"/><stop offset="1" stop-color="#404880"/></linearGradient></defs></svg>
<svg style="position:absolute;left:522px;top:99px;overflow:visible" width="22" height="21" viewBox="0 0 22 21"><path d="M10.5 0.5 L20.5 10.5 L15.5 10.5 L15.5 19.5 L5.5 19.5 L5.5 10.5 L0.5 10.5 Z" fill="url(#ga)" stroke="#1E6E14" stroke-width="1.2" stroke-linejoin="miter"/></svg>
<svg style="position:absolute;left:522px;top:139px;overflow:visible" width="22" height="21" viewBox="0 0 22 21"><path d="M5.5 0.5 L15.5 0.5 L15.5 9.5 L20.5 9.5 L10.5 19.5 L0.5 9.5 L5.5 9.5 Z" fill="url(#ga)" stroke="#1E6E14" stroke-width="1.2" stroke-linejoin="miter"/></svg>
<svg style="position:absolute;left:466px;top:542px;overflow:visible" width="22" height="21" viewBox="0 0 22 21"><path d="M10.5 0.5 L20.5 10.5 L15.5 10.5 L15.5 19.5 L5.5 19.5 L5.5 10.5 L0.5 10.5 Z" fill="url(#ga)" stroke="#1E6E14" stroke-width="1.2" stroke-linejoin="miter"/></svg>
<svg style="position:absolute;left:466px;top:584px;overflow:visible" width="22" height="21" viewBox="0 0 22 21"><path d="M5.5 0.5 L15.5 0.5 L15.5 9.5 L20.5 9.5 L10.5 19.5 L0.5 9.5 L5.5 9.5 Z" fill="url(#ga)" stroke="#1E6E14" stroke-width="1.2" stroke-linejoin="miter"/></svg>
<svg style="position:absolute;left:483px;top:283px;overflow:visible" width="22" height="22" viewBox="0 0 22 22"><circle cx="11" cy="11" r="10.3" fill="url(#gc)" stroke="#1A8A14" stroke-width="1"/><path d="M3.8 11.2 L11.3 4 L11.3 9.6 L18 9.6 L18 12.6 L11.3 12.6 L11.3 18.4 Z" fill="#F4FFF0" stroke="#1A6A10" stroke-width="0.6"/></svg>
<svg style="position:absolute;left:483px;top:375px;overflow:visible" width="22" height="22" viewBox="0 0 22 22"><circle cx="11" cy="11" r="10.3" fill="url(#oc)" stroke="#C03010" stroke-width="1"/><path d="M17.8 11 L10 3.2 L10 9.6 L4 9.6 L4 12.6 L10 12.6 L10 18.6 Z" fill="#FFF8F0" stroke="#A03010" stroke-width="0.6"/></svg>
<svg style="position:absolute;left:568px;top:64px;overflow:visible" width="17" height="17" viewBox="0 0 17 17"><path d="M1.5 5 L14.5 5 L14.5 12 Q14.5 14.8 8 14.8 Q1.5 14.8 1.5 12 Z" fill="url(#bb)" stroke="#1A3A8A" stroke-width="1"/><rect x="3" y="6" width="2" height="7" fill="#8CD0FF" opacity="0.7"/><rect x="2" y="1.5" width="12" height="4" rx="1" fill="#ECECEC" stroke="#6C7488" stroke-width="1"/><rect x="4" y="3" width="2" height="1.5" fill="#98A0B0"/><rect x="7.5" y="3" width="2" height="1.5" fill="#98A0B0"/><rect x="11" y="3" width="1.5" height="1.5" fill="#98A0B0"/><path d="M10.2 7.6 h2.6 v2.6 h2.6 v2.6 h-2.6 v2.6 h-2.6 v-2.6 h-2.6 v-2.6 h2.6 Z" fill="#58E838" stroke="#0A600A" stroke-width="1.1"/></svg>
<svg style="position:absolute;left:569px;top:100px;overflow:visible" width="14" height="14" viewBox="0 0 14 14"><rect x="0.5" y="0.5" width="13" height="12.5" rx="1.5" fill="#F4F8FF" stroke="#8C94B0" stroke-width="1"/><path d="M4.6 10.3 V3.9 H7.6 Q9.6 3.9 9.6 6 V10.3" fill="none" stroke="#101010" stroke-width="1.2" stroke-linejoin="miter"/></svg>
<svg style="position:absolute;left:568px;top:134px;overflow:visible" width="16" height="16" viewBox="0 0 16 16"><path d="M3 3 L13 13 M13 2.5 L3 13" stroke="#A01808" stroke-width="5.2" stroke-linecap="round"/><path d="M3 3 L13 13 M13 2.5 L3 13" stroke="#FF5A38" stroke-width="3.2" stroke-linecap="round"/></svg>
<svg style="position:absolute;left:568px;top:169px;overflow:visible" width="16" height="16" viewBox="0 0 16 16"><path d="M5.5 1.5 H11.5 L14.5 4.5 V12.5 H5.5 Z" fill="#E4E4FF" stroke="#4A4A70" stroke-width="1"/><path d="M1.5 3.5 H7.5 L10.5 6.5 V14.5 H1.5 Z" fill="#F4F6FF" stroke="#4A4A70" stroke-width="1"/><rect x="3" y="8" width="6" height="1" fill="#A0B0D0"/><rect x="3" y="10" width="6" height="3" fill="#B8C4DC"/></svg>
<svg style="position:absolute;left:729px;top:170px;overflow:visible" width="16" height="14" viewBox="0 0 16 14"><rect x="4.5" y="1.5" width="10" height="11" rx="1" fill="url(#imp)" stroke="#303868" stroke-width="1"/><path d="M1 5.5 H5.5 V3 L10 7 L5.5 11 V8.5 H1 Z" fill="#70E050" stroke="#1A7A1A" stroke-width="0.8"/></svg>
</body></html>
